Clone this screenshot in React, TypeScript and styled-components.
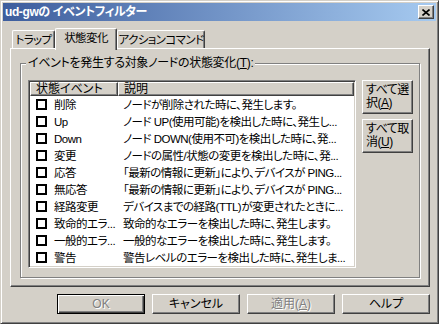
import React from "react";
import styled, { createGlobalStyle } from "styled-components";

const GlobalStyle = createGlobalStyle`
  html, body { margin: 0; padding: 0; background: #d4d0c8; }
  body {
    font-family: "Liberation Sans", "Noto Sans CJK JP", sans-serif;
    font-size: 12px;
    font-feature-settings: "palt";
    color: #000;
  }
  * { box-sizing: border-box; }
`;

const Window = styled.div`
  width: 439px;
  height: 324px;
  background: #d4d0c8;
  border: 1px solid;
  border-color: #d4d0c8 #404040 #404040 #d4d0c8;
  box-shadow: inset 1px 1px 0 #fff, inset -1px -1px 0 #808080;
  padding: 2px;
  display: flex;
  flex-direction: column;
`;

const TitleBar = styled.div`
  height: 18px;
  display: flex;
  align-items: center;
  justify-content: space-between;
  padding: 0 2px 0 2px;
  background: linear-gradient(to right, #3d5d9d, #a6caf0);
  color: #fff;
  font-weight: bold;
  font-size: 12px;
  line-height: 14px;
  letter-spacing: -0.4px;
`;

const CloseButton = styled.div`
  width: 16px;
  height: 14px;
  background: #d4d0c8;
  border: 1px solid;
  border-color: #fff #404040 #404040 #fff;
  box-shadow: inset -1px -1px 0 #808080;
  display: flex;
  align-items: center;
  justify-content: center;
`;

const Body = styled.div`
  flex: 1;
  display: flex;
  flex-direction: column;
  padding: 7px 6px 7px 7px;
`;

const TabStrip = styled.div`
  height: 20px;
  display: flex;
  align-items: flex-end;
  padding-left: 2px;
`;

const Tab = styled.div<{ $w: number; $active?: boolean }>`
  width: ${(p) => p.$w}px;
  height: ${(p) => (p.$active ? 22 : 18)}px;
  margin-bottom: ${(p) => (p.$active ? -2 : 0)}px;
  position: relative;
  z-index: ${(p) => (p.$active ? 1 : 0)};
  background: #d4d0c8;
  border-top: 1px solid #fff;
  border-left: 1px solid #fff;
  border-right: 1px solid #404040;
  box-shadow: inset -1px 0 0 #808080;
  border-radius: 2px 2px 0 0;
  display: flex;
  align-items: center;
  justify-content: center;
  padding-bottom: ${(p) => (p.$active ? 3 : 0)}px;
  font-size: 11.5px;
  line-height: 14px;
  letter-spacing: -0.6px;
  white-space: nowrap;
`;

const TabPanel = styled.div`
  height: 239px;
  border: 1px solid;
  border-color: #fff #404040 #404040 #fff;
  box-shadow: inset -1px -1px 0 #808080;
  padding: 14px 9px 8px 9px;
  display: flex;
`;

const GroupBox = styled.div`
  position: relative;
  flex: 1;
  border: 1px solid #808080;
  box-shadow: 1px 1px 0 #fff, inset 1px 1px 0 #fff;
  padding: 16px 6px 9px 7px;
  display: flex;
  gap: 6px;
`;

const GroupLabel = styled.div`
  position: absolute;
  top: -8px;
  left: 5px;
  padding: 0 2px;
  background: #d4d0c8;
  line-height: 14px;
  letter-spacing: -0.3px;
  white-space: nowrap;
`;

const ListView = styled.div`
  width: 328px;
  background: #fff;
  border: 1px solid;
  border-color: #808080 #fff #fff #808080;
  box-shadow: inset 1px 1px 0 #404040, inset -1px -1px 0 #d4d0c8;
  padding: 1px;
  display: flex;
  flex-direction: column;
`;

const HeaderRow = styled.div`
  display: flex;
  height: 14px;
`;

const HeaderCell = styled.div<{ $w: number }>`
  width: ${(p) => p.$w}px;
  height: 14px;
  background: #d4d0c8;
  border-top: 1px solid #fff;
  border-left: 1px solid #fff;
  border-right: 1px solid #404040;
  border-bottom: 1px solid #404040;
  box-shadow: inset -1px -1px 0 #808080;
  padding-left: 5px;
  display: flex;
  align-items: center;
  line-height: 12px;
  white-space: nowrap;
`;

const Row = styled.div`
  display: flex;
  align-items: center;
  height: 17px;
  line-height: 14px;
  white-space: nowrap;
`;

const NameCell = styled.div`
  width: 88px;
  display: flex;
  align-items: center;
  padding-left: 6px;
  gap: 7px;
  overflow: hidden;
  font-size: 11.5px;
  letter-spacing: -0.5px;
`;

const DescCell = styled.div`
  flex: 1;
  padding-left: 5px;
  overflow: hidden;
  font-size: 11.5px;
  letter-spacing: -0.5px;
`;

const CheckBox = styled.span`
  width: 11px;
  height: 11px;
  flex: none;
  border: 2px solid #000;
  background: #fff;
`;

const SideButtons = styled.div`
  width: 51px;
  display: flex;
  flex-direction: column;
  gap: 5px;
`;

const SideButton = styled.div`
  height: 34px;
  background: #d4d0c8;
  border: 1px solid;
  border-color: #fff #404040 #404040 #fff;
  box-shadow: inset -1px -1px 0 #808080;
  padding-left: 3px;
  display: flex;
  align-items: center;
  line-height: 13px;
  white-space: nowrap;
  letter-spacing: -0.5px;
`;

const ButtonRow = styled.div`
  margin-top: 7px;
  height: 20px;
  display: flex;
  justify-content: flex-end;
  gap: 7px;
`;

const DialogButton = styled.div<{ $default?: boolean; $disabled?: boolean }>`
  width: 88px;
  height: 20px;
  background: #d4d0c8;
  border: 1px solid;
  border-color: ${(p) => (p.$default ? "#000" : "#fff #404040 #404040 #fff")};
  box-shadow: ${(p) =>
    p.$default
      ? "inset 1px 1px 0 #fff, inset -1px -1px 0 #404040, inset -2px -2px 0 #808080"
      : "inset -1px -1px 0 #808080"};
  color: ${(p) => (p.$disabled ? "#808080" : "#000")};
  text-shadow: ${(p) => (p.$disabled ? "1px 1px 0 #fff" : "none")};
  display: flex;
  align-items: center;
  justify-content: center;
  line-height: 14px;
`;

const rows: [string, string][] = [
  ["削除", "ノードが削除された時に、発生します。"],
  ["Up", "ノード UP(使用可能)を検出した時に、発生し..."],
  ["Down", "ノード DOWN(使用不可)を検出した時に、発..."],
  ["変更", "ノードの属性/状態の変更を検出した時に、発..."],
  ["応答", "「最新の情報に更新」により、デバイスが PING..."],
  ["無応答", "「最新の情報に更新」により、デバイスが PING..."],
  ["経路変更", "デバイスまでの経路(TTL)が変更されたときに..."],
  ["致命的エラ...", "致命的なエラーを検出した時に、発生します。"],
  ["一般的エラ...", "一般的なエラーを検出した時に、発生します。"],
  ["警告", "警告レベルのエラーを検出した時に、発生しま..."],
];

export default function App() {
  return (
    <>
      <GlobalStyle />
      <Window>
        <TitleBar>
          <span>ud-gwの イベントフィルター</span>
          <CloseButton>
            <svg width="8" height="7" viewBox="0 0 8 7">
              <path d="M0.5 0.5 L7.5 6.5 M7.5 0.5 L0.5 6.5" stroke="#000" strokeWidth="1.6" />
            </svg>
          </CloseButton>
        </TitleBar>
        <Body>
          <TabStrip>
            <Tab $w={43}>トラップ</Tab>
            <Tab $w={62} $active>状態変化</Tab>
            <Tab $w={88}>アクションコマンド</Tab>
          </TabStrip>
          <TabPanel>
            <GroupBox>
              <GroupLabel>
                イベントを発生する対象ノードの状態変化(<u>T</u>):
              </GroupLabel>
              <ListView>
                <HeaderRow>
                  <HeaderCell $w={88}>状態イベント</HeaderCell>
                  <HeaderCell $w={236}>説明</HeaderCell>
                </HeaderRow>
                {rows.map(([name, desc]) => (
                  <Row key={name}>
                    <NameCell>
                      <CheckBox />
                      <span>{name}</span>
                    </NameCell>
                    <DescCell>{desc}</DescCell>
                  </Row>
                ))}
              </ListView>
              <SideButtons>
                <SideButton>
                  <span>
                    すべて選
                    <br />
                    択(<u>A</u>)
                  </span>
                </SideButton>
                <SideButton>
                  <span>
                    すべて取
                    <br />
                    消(<u>U</u>)
                  </span>
                </SideButton>
              </SideButtons>
            </GroupBox>
          </TabPanel>
          <ButtonRow>
            <DialogButton $default $disabled>OK</DialogButton>
            <DialogButton>キャンセル</DialogButton>
            <DialogButton $disabled>
              適用(<u>A</u>)
            </DialogButton>
            <DialogButton>ヘルプ</DialogButton>
          </ButtonRow>
        </Body>
      </Window>
    </>
  );
}
